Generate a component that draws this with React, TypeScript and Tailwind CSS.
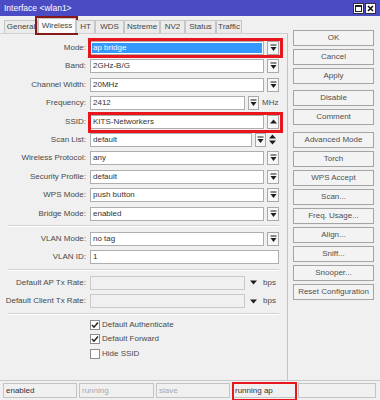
import React from "react"

const font = { fontFamily: '"Liberation Sans", Arial, sans-serif' }

function DropIcon() {
  return (
    <svg width="7" height="8" viewBox="0 0 7 8">
      <rect x="0.5" y="0.5" width="6" height="1" fill="#1e1e1e" />
      <path d="M0.5 3h6l-3 4z" fill="#1e1e1e" />
    </svg>
  )
}

function UpIcon() {
  return (
    <svg width="7" height="5" viewBox="0 0 7 5">
      <path d="M0 4.5h7l-3.5-4z" fill="#1e1e1e" />
    </svg>
  )
}

function UpDownIcon() {
  return (
    <svg width="7" height="11" viewBox="0 0 7 11">
      <path d="M0 4.5h7l-3.5-4z" fill="#1e1e1e" />
      <path d="M0 6.5h7l-3.5 4z" fill="#1e1e1e" />
    </svg>
  )
}

function Btn({ children, w = "w-[12px]" }: { children: React.ReactNode; w?: string }) {
  return (
    <div className={`${w} ml-[3px] h-[14px] border border-[#a9a9a9] bg-[#f7f7f7] flex items-center justify-center`}>
      {children}
    </div>
  )
}

function Field({ value, disabled }: { value?: string; disabled?: boolean }) {
  return (
    <div
      className={`flex-1 h-[14px] border ${
        disabled ? "border-[#c9c9c9] bg-[#f0f0f0]" : "border-[#aeaeae] bg-white"
      } pl-[2px] flex items-center leading-none text-[#333] whitespace-nowrap overflow-hidden`}
    >
      {value}
    </div>
  )
}

function Row({ label, children }: { label: string; children: React.ReactNode }) {
  return (
    <div className="flex items-center h-[18.4px]">
      <div className="w-[86px] text-right text-[#4a4a4a] whitespace-nowrap">{label}</div>
      <div className="ml-[4px] w-[189px] flex items-center relative">{children}</div>
    </div>
  )
}

function Sep() {
  return (
    <div className="h-[7px] flex items-center pl-[8px]">
      <div className="w-[271px] border-t border-[#d2d2d2] border-b border-b-white" />
    </div>
  )
}

function Check({ label, checked }: { label: string; checked?: boolean }) {
  return (
    <div className="flex items-center h-[14.5px] pl-[90px]">
      <div className="w-[10px] h-[10px] border border-[#8c8c8c] bg-white flex items-center justify-center">
        {checked && (
          <svg width="8" height="8" viewBox="0 0 8 8">
            <path d="M1 4l2 2.2L7 1.5" stroke="#222" strokeWidth="1.5" fill="none" />
          </svg>
        )}
      </div>
      <span className="ml-[2px] text-[#4a4a4a]">{label}</span>
    </div>
  )
}

function SideButton({ label, mt = "mt-[3px]" }: { label: string; mt?: string }) {
  return (
    <div
      className={`${mt} w-[81px] h-[16px] border border-[#a4a4a4] bg-[#f3f3f3] flex items-center justify-center text-[#505050] whitespace-nowrap`}
    >
      {label}
    </div>
  )
}

const tabs = [
  { name: "General", w: "w-[34px]" },
  { name: "Wireless", w: "w-[38px]", active: true },
  { name: "HT", w: "w-[19px]" },
  { name: "WDS", w: "w-[29px]" },
  { name: "Nstreme", w: "w-[36px]" },
  { name: "NV2", w: "w-[25px]" },
  { name: "Status", w: "w-[31px]" },
  { name: "Traffic", w: "w-[26px]" },
]

export default function App() {
  return (
    <div className="w-[380px] h-[400px] bg-[#f0f0f0] flex flex-col text-[8px] overflow-hidden" style={font}>
      {/* Title bar */}
      <div className="h-[16px] bg-[#4b4bc3] flex items-center pl-[4px] pr-[4px]">
        <span className="text-white text-[8.5px] flex-1">Interface &lt;wlan1&gt;</span>
        <div className="flex gap-[1px]">
          <div className="w-[11px] h-[11px] bg-white border border-[#333] flex items-center justify-center">
            <div className="w-[7px] h-[7px] border border-[#222] border-t-2" />
          </div>
          <div className="w-[11px] h-[11px] bg-white border border-[#333] flex items-center justify-center">
            <svg width="7" height="7" viewBox="0 0 7 7">
              <path d="M1 1l5 5M6 1l-5 5" stroke="#111" strokeWidth="1.6" />
            </svg>
          </div>
        </div>
      </div>

      <div className="flex flex-1">
        {/* Left: tabs + form */}
        <div className="w-[288px] flex flex-col">
          <div className="h-[17px] flex items-end pl-[4px]">
            {tabs.map((t) => (
              <div key={t.name} className="relative">
                <div
                  className={`${t.w} ${
                    t.active ? "h-[15px] bg-[#fbfbfb]" : "h-[13px] bg-[#ebebeb]"
                  } border border-b-0 border-[#c6c6c6] flex items-center justify-center text-[#444] whitespace-nowrap`}
                >
                  {t.name}
                </div>
                {t.active && (
                  <div className="absolute -left-[3px] -right-[2px] -top-[2px] -bottom-[2px] border-[2px] border-[#861a1a]" />
                )}
              </div>
            ))}
          </div>

          <div className="flex-1 border-t border-[#d0d0d0] border-r border-r-[#c4c4c4] pt-[4.8px]">
            <Row label="Mode:">
              <div className="flex-1 h-[14px] border border-[#aeaeae] bg-white p-[1px]">
                <div className="h-full bg-[#3399ff] text-white flex items-center pl-[1px] leading-none">ap bridge</div>
              </div>
              <Btn>
                <DropIcon />
              </Btn>
              <div className="absolute -left-[2px] -right-[4px] -top-[3px] -bottom-[3px] border-[3px] border-[#e8161c]" />
            </Row>
            <Row label="Band:">
              <Field value="2GHz-B/G" />
              <Btn>
                <DropIcon />
              </Btn>
            </Row>
            <Row label="Channel Width:">
              <Field value="20MHz" />
              <Btn>
                <DropIcon />
              </Btn>
            </Row>
            <Row label="Frequency:">
              <Field value="2412" />
              <Btn w="w-[11px]">
                <DropIcon />
              </Btn>
              <span className="w-[17px] ml-[3px] text-[#4a4a4a]">MHz</span>
            </Row>
            <Row label="SSID:">
              <Field value="KITS-Networkers" />
              <Btn>
                <UpIcon />
              </Btn>
              <div className="absolute -left-[2px] -right-[4px] -top-[3px] -bottom-[4px] border-[3px] border-[#e8161c]" />
            </Row>
            <Row label="Scan List:">
              <Field value="default" />
              <Btn w="w-[11px]">
                <DropIcon />
              </Btn>
              <div className="w-[13px] flex justify-center">
                <UpDownIcon />
              </div>
            </Row>
            <Row label="Wireless Protocol:">
              <Field value="any" />
              <Btn>
                <DropIcon />
              </Btn>
            </Row>
            <Row label="Security Profile:">
              <Field value="default" />
              <Btn>
                <DropIcon />
              </Btn>
            </Row>
            <Row label="WPS Mode:">
              <Field value="push button" />
              <Btn>
                <DropIcon />
              </Btn>
            </Row>
            <Row label="Bridge Mode:">
              <Field value="enabled" />
              <Btn>
                <DropIcon />
              </Btn>
            </Row>
            <Sep />
            <Row label="VLAN Mode:">
              <Field value="no tag" />
              <Btn>
                <DropIcon />
              </Btn>
            </Row>
            <Row label="VLAN ID:">
              <Field value="1" />
            </Row>
            <Sep />
            <Row label="Default AP Tx Rate:">
              <Field disabled />
              <div className="w-[11px] ml-[3px] flex justify-center">
                <svg width="7" height="5" viewBox="0 0 7 5">
                  <path d="M0 0.5h7l-3.5 4z" fill="#1e1e1e" />
                </svg>
              </div>
              <span className="w-[17px] ml-[3px] text-[#4a4a4a] pl-[1px]">bps</span>
            </Row>
            <Row label="Default Client Tx Rate:">
              <Field disabled />
              <div className="w-[11px] ml-[3px] flex justify-center">
                <svg width="7" height="5" viewBox="0 0 7 5">
                  <path d="M0 0.5h7l-3.5 4z" fill="#1e1e1e" />
                </svg>
              </div>
              <span className="w-[17px] ml-[3px] text-[#4a4a4a] pl-[1px]">bps</span>
            </Row>
            <Sep />
            <Check label="Default Authenticate" checked />
            <Check label="Default Forward" checked />
            <Check label="Hide SSID" />
          </div>
        </div>

        {/* Right: buttons */}
        <div className="pl-[5px] pt-[14px] flex flex-col">
          <SideButton label="OK" mt="mt-0" />
          <SideButton label="Cancel" />
          <SideButton label="Apply" />
          <SideButton label="Disable" mt="mt-[6px]" />
          <SideButton label="Comment" />
          <SideButton label="Advanced Mode" mt="mt-[7px]" />
          <SideButton label="Torch" />
          <SideButton label="WPS Accept" />
          <SideButton label="Scan..." />
          <SideButton label="Freq. Usage..." />
          <SideButton label="Align..." />
          <SideButton label="Sniff..." />
          <SideButton label="Snooper..." />
          <SideButton label="Reset Configuration" />
        </div>
      </div>

      {/* Status bar */}
      <div className="h-[20px] border-t border-[#c8c8c8] flex items-start gap-[2px] pl-[3px] pr-[4px] pt-[2px]">
        <div className="w-[74px] h-[15px] border border-[#c4c4c4] pl-[2px] flex items-center text-[#333]">enabled</div>
        <div className="w-[75px] h-[15px] border border-[#c4c4c4] pl-[2px] flex items-center text-[#a8a8a8]">running</div>
        <div className="w-[74px] h-[15px] border border-[#c4c4c4] pl-[2px] flex items-center text-[#a8a8a8]">slave</div>
        <div className="relative w-[64px] h-[15px] border border-[#c4c4c4] pl-[2px] flex items-center text-[#333]">
          running ap
          <div className="absolute -left-[1px] -right-[2px] -top-[2px] -bottom-[4px] border-[2px] border-[#e8161c]" />
        </div>
        <div className="flex-1 h-[15px] border border-[#c4c4c4]" />
      </div>
    </div>
  )
}
